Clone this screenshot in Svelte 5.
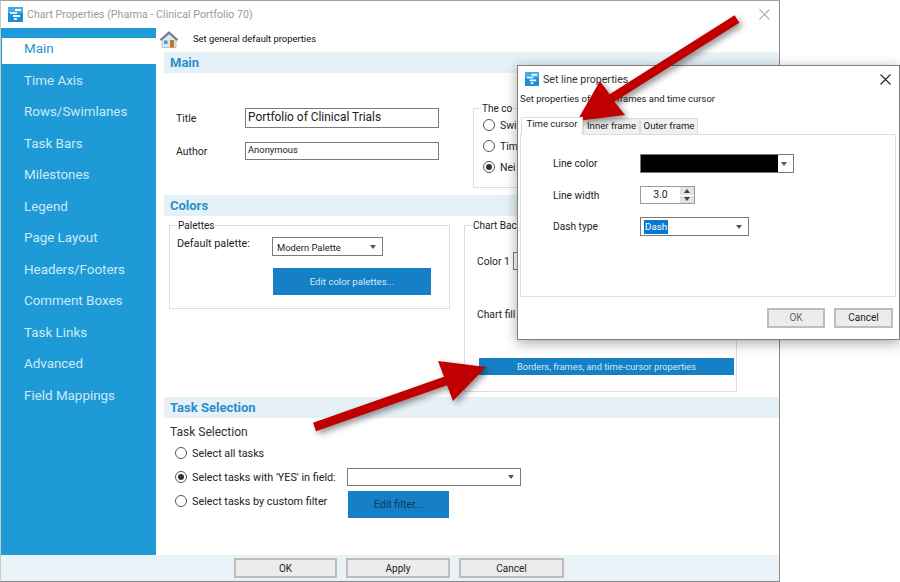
<script>
  const navItems = ['Main', 'Time Axis', 'Rows/Swimlanes', 'Task Bars', 'Milestones', 'Legend', 'Page Layout', 'Headers/Footers', 'Comment Boxes', 'Task Links', 'Advanced', 'Field Mappings'];
  const tabs = ['Time cursor', 'Inner frame', 'Outer frame'];
</script>

{#snippet appIcon()}
  <svg class="app-icon" viewBox="0 0 15 15" aria-hidden="true">
    <rect width="15" height="15" fill="#1b8fd2" />
    <rect width="15" height="6" fill="#3fb0e6" />
    <rect x="7" y="2" width="6" height="2" fill="#fff" />
    <rect x="2" y="5" width="7" height="2" fill="#d8effa" />
    <rect x="5" y="8" width="7" height="2" fill="#fff" />
    <rect x="6" y="11" width="3" height="2" fill="#d8effa" />
  </svg>
{/snippet}

{#snippet caret()}
  <span class="caret"></span>
{/snippet}

<div class="desktop">
  <div class="window">
    <div class="titlebar">
      {@render appIcon()}
      <span class="title-text">Chart Properties (Pharma - Clinical Portfolio 70)</span>
      <svg class="close-x" viewBox="0 0 11 11" aria-hidden="true"><path d="M.5.5l10 10M10.5.5l-10 10" stroke="#aeaeae" stroke-width="1.1" fill="none" /></svg>
    </div>

    <div class="body">
      <nav class="sidebar">
        {#each navItems as item, i}
          <div class="nav-item" class:active={i === 0}>{item}</div>
        {/each}
      </nav>

      <main class="content">
        <div class="page-head">
          <svg class="home" viewBox="0 0 20 18" aria-hidden="true">
            <path d="M3 9v8.500h14V9L10 3z" fill="#dfe9ef" stroke="#8fa2ad" stroke-width=".6" />
            <path d="M1 9.500L10 1.500l9 8-1.200 1L10 3.800 2.200 10.500z" fill="#6f7f88" stroke="#56646c" stroke-width=".5" />
            <rect x="11" y="10" width="4" height="7.500" fill="#c9761f" />
            <rect x="5" y="10.500" width="3.500" height="3.500" fill="#3e9ad0" />
          </svg>
          <span>Set general default properties</span>
        </div>

        <h2 class="section">Main</h2>
        <div class="main-body">
          <div class="fields">
            <div class="field title-field">
              <span>Title</span>
              <div class="input big">Portfolio of Clinical Trials</div>
            </div>
            <div class="field">
              <span>Author</span>
              <div class="input small">Anonymous</div>
            </div>
          </div>
          <div class="group combine">
            <span class="legend">The co</span>
            <div class="radio-line"><span class="radio"></span>Swi</div>
            <div class="radio-line"><span class="radio"></span>Tim</div>
            <div class="radio-line"><span class="radio on"></span>Nei</div>
          </div>
        </div>

        <h2 class="section">Colors</h2>
        <div class="colors-body">
          <div class="group palettes">
            <span class="legend">Palettes</span>
            <div class="palette-row">
              <span class="palette-label">Default palette:</span>
              <div class="select palette-select"><span class="palette-value">Modern Palette</span>{@render caret()}</div>
            </div>
            <button class="action edit-palettes">Edit color palettes...</button>
          </div>
          <div class="group background">
            <span class="legend">Chart Back</span>
            <div class="color-row">
              <span class="color-label">Color 1</span>
              <div class="color-box"></div>
            </div>
            <div class="fill-row">Chart fill</div>
            <button class="action borders">Borders, frames, and time-cursor properties</button>
          </div>
        </div>

        <h2 class="section">Task Selection</h2>
        <div class="task-body">
          <div class="task-title">Task Selection</div>
          <div class="task-row"><div class="radio-line task-radio"><span class="radio"></span>Select all tasks</div></div>
          <div class="task-row">
            <div class="radio-line task-radio"><span class="radio on"></span>Select tasks with 'YES' in field:</div>
            <div class="select field-select">{@render caret()}</div>
          </div>
          <div class="task-row last">
            <div class="radio-line task-radio"><span class="radio"></span>Select tasks by custom filter</div>
            <button class="action edit-filter">Edit filter...</button>
          </div>
        </div>
      </main>
    </div>

    <footer class="footer">
      <button class="plain ok">OK</button>
      <button class="plain apply">Apply</button>
      <button class="plain cancel">Cancel</button>
    </footer>
  </div>

  <div class="dialog">
    <div class="dialog-title">
      {@render appIcon()}
      <span>Set line properties</span>
      <svg class="dialog-close" viewBox="0 0 11 11" aria-hidden="true"><path d="M.5.5l10 10M10.5.5l-10 10" stroke="#222" stroke-width="1.1" fill="none" /></svg>
    </div>
    <div class="dialog-sub">Set properties of lines, frames and time cursor</div>
    <div class="tabs">
      {#each tabs as tab, i}
        <div class="tab" class:current={i === 0}>{tab}</div>
      {/each}
    </div>
    <div class="pane">
      <div class="pane-row">
        <span>Line color</span>
        <div class="select color-select"><div class="swatch"></div>{@render caret()}</div>
      </div>
      <div class="pane-row">
        <span>Line width</span>
        <div class="spinner">
          <span class="spin-value">3.0</span>
          <div class="spin-buttons">
            <span class="spin up"></span>
            <span class="spin down"></span>
          </div>
        </div>
      </div>
      <div class="pane-row">
        <span>Dash type</span>
        <div class="select dash-select"><span class="picked">Dash</span>{@render caret()}</div>
      </div>
    </div>
    <div class="dialog-actions">
      <button class="plain dialog-ok">OK</button>
      <button class="plain dialog-cancel">Cancel</button>
    </div>
  </div>

  <svg class="arrows" viewBox="0 0 900 582" aria-hidden="true">
    <polygon points="734.600,15.200 739.400,22.800 614.400,101.800 625,115 577,121 600,81 609.600,94.200" fill="#c00000" />
    <polygon points="313,422.800 316,431.200 447,385.200 453,401 486,367 438,361 444,376.800" fill="#c00000" />
  </svg>
</div>

<style>
  :global(body) {
    margin: 0;
    background: #fff;
  }

  .desktop {
    position: relative;
    width: 900px;
    height: 582px;
    overflow: hidden;
    font-family: Roboto, "Noto Sans", sans-serif;
    font-size: 10px;
    color: #222;
  }

  .window {
    width: 780px;
    height: 582px;
    box-sizing: border-box;
    display: flex;
    flex-direction: column;
    background: #fff;
    border: 1px solid #8a8a8a;
    border-left-color: #c8c8c8;
    border-top-color: #a0a0a0;
  }

  .titlebar {
    height: 27px;
    flex: none;
    display: flex;
    align-items: center;
    padding-left: 7px;
    padding-right: 9px;
  }

  .app-icon {
    width: 15px;
    height: 15px;
    flex: none;
  }

  .title-text {
    margin-left: 4px;
    font-size: 10.650px;
    color: #9a9a9a;
  }

  .close-x {
    width: 11px;
    height: 11px;
    margin-left: auto;
    margin-top: -1px;
  }

  .body {
    flex: 1;
    display: flex;
    min-height: 0;
  }

  .sidebar {
    width: 155px;
    flex: none;
    background: #1e9ad6;
    padding-top: 10px;
    box-sizing: border-box;
    display: flex;
    flex-direction: column;
    gap: 6px;
  }

  .nav-item {
    height: 25.500px;
    line-height: 21.500px;
    padding-left: 23px;
    font-size: 13.400px;
    color: #cdeaf8;
  }

  .nav-item.active {
    margin-left: 1px;
    padding-left: 22px;
    background: #fff;
    color: #1e94d4;
  }

  .content {
    flex: 1;
    min-width: 0;
    padding-left: 8px;
    display: flex;
    flex-direction: column;
  }

  .page-head {
    height: 24px;
    flex: none;
    display: flex;
    align-items: center;
    margin-left: -5px;
    font-size: 9.400px;
    color: #111;
  }

  .home {
    width: 20px;
    height: 18px;
    margin-right: 14px;
    margin-top: -3px;
  }

  .page-head span {
    margin-top: -3px;
  }

  .section {
    margin: 0;
    height: 21px;
    flex: none;
    background: #e6f1f7;
    padding-left: 6px;
    line-height: 21px;
    font-size: 13px;
    font-weight: 700;
    color: #2a8fca;
  }

  .main-body {
    height: 122px;
    flex: none;
    box-sizing: border-box;
    padding-top: 35px;
    display: flex;
  }

  .fields {
    margin-left: 12px;
    width: 263px;
    display: flex;
    flex-direction: column;
    gap: 14px;
  }

  .field {
    display: flex;
    align-items: center;
    font-size: 10.500px;
  }

  .field span {
    width: 69px;
    flex: none;
    margin-top: 1px;
  }

  .input {
    width: 194px;
    box-sizing: border-box;
    border: 1px solid #7a7a7a;
    padding-left: 2px;
    background: #fff;
    white-space: nowrap;
  }

  .input.big {
    height: 20px;
    line-height: 16px;
    font-size: 11.900px;
  }

  .input.small {
    height: 18px;
    line-height: 13px;
    font-size: 9.400px;
  }

  .group {
    position: relative;
    box-sizing: border-box;
    border: 1px solid #ddd;
  }

  .legend {
    position: absolute;
    top: -7px;
    left: 7px;
    background: #fff;
    padding: 0 1px;
    font-size: 10px;
    line-height: 14px;
    white-space: nowrap;
  }

  .combine {
    margin-left: 34px;
    width: 260px;
    height: 80px;
    padding: 10px 0 0 9px;
    display: flex;
    flex-direction: column;
    gap: 9px;
    font-size: 10.500px;
  }

  .radio-line {
    display: flex;
    align-items: center;
    height: 12px;
    white-space: nowrap;
  }

  .radio {
    width: 12px;
    height: 12px;
    box-sizing: border-box;
    flex: none;
    border: 1px solid #555;
    border-radius: 50%;
    margin-right: 5px;
    background: #fff;
    display: flex;
    align-items: center;
    justify-content: center;
  }

  .radio.on::after {
    content: "";
    width: 6px;
    height: 6px;
    border-radius: 50%;
    background: #333;
  }

  .colors-body {
    height: 181px;
    flex: none;
    box-sizing: border-box;
    padding: 9px 0 0 5px;
    display: flex;
    align-items: flex-start;
    gap: 14px;
  }

  .palettes {
    width: 281px;
    height: 84px;
    padding: 11px 0 0 7px;
    font-size: 10.800px;
  }

  .palette-row {
    display: flex;
    align-items: flex-start;
  }

  .palette-label {
    width: 95px;
    flex: none;
    line-height: 14px;
  }

  .select {
    position: relative;
    box-sizing: border-box;
    height: 19px;
    border: 1px solid #7a7a7a;
    background: #fff;
    display: flex;
    align-items: center;
    padding-left: 4px;
    font-size: 9.800px;
  }

  .palette-value {
    font-size: 9.400px;
    margin-top: 2px;
  }

  .caret {
    position: absolute;
    right: 6px;
    top: 50%;
    margin-top: -2px;
    border-left: 3.500px solid transparent;
    border-right: 3.500px solid transparent;
    border-top: 4px solid #555;
  }

  .palette-select {
    width: 111px;
  }

  .action {
    display: block;
    border: none;
    padding: 0;
    background: #1580c6;
    color: #d3e8f6;
    font-family: inherit;
    font-size: 9.600px;
  }

  .edit-palettes {
    margin: 12px 0 0 96px;
    width: 158px;
    height: 27px;
  }

  .background {
    width: 273px;
    height: 167px;
    padding: 26px 0 0 12px;
    font-size: 10.300px;
  }

  .color-row {
    display: flex;
    align-items: center;
    height: 18px;
  }

  .color-label {
    width: 36px;
    flex: none;
  }

  .color-box {
    width: 100px;
    height: 18px;
    box-sizing: border-box;
    border: 1px solid #7a7a7a;
  }

  .fill-row {
    margin-top: 38px;
    line-height: 14px;
  }

  .borders {
    margin: 36px 0 0 2px;
    width: 255px;
    height: 17px;
    font-size: 9.300px;
  }

  .task-body {
    flex: 1;
    padding: 7px 0 0 6px;
    font-size: 10.800px;
  }

  .task-title {
    height: 16px;
    line-height: 14px;
    font-size: 12px;
    color: #333;
  }

  .task-row {
    display: flex;
    align-items: center;
    height: 24px;
  }

  .task-row.last {
    align-items: flex-start;
  }

  .task-row.last .task-radio {
    margin-top: 6px;
  }

  .task-radio {
    margin-left: 5px;
    width: 172px;
    flex: none;
  }

  .field-select {
    width: 174px;
    height: 18px;
  }

  .edit-filter {
    width: 101px;
    height: 27px;
    margin: 2px 0 0 1px;
    font-size: 10.600px;
    color: #0d3a5c;
  }

  .footer {
    height: 26px;
    flex: none;
    background: #e9f2f7;
    display: flex;
    padding: 3px 0 0 233px;
    box-sizing: border-box;
    gap: 9px;
  }

  .plain {
    height: 20px;
    box-sizing: border-box;
    padding: 0;
    border: 2px solid #bdbdbd;
    background: #ececec;
    font-family: inherit;
    font-size: 10px;
    color: #222;
  }

  .ok { width: 103px; }
  .apply { width: 104px; }
  .cancel { width: 105px; }

  .dialog {
    position: absolute;
    left: 517px;
    top: 65px;
    width: 383px;
    height: 275px;
    box-sizing: border-box;
    background: #fff;
    border: 1px solid #808080;
    box-shadow: 0 3px 12px rgba(0, 0, 0, 0.35);
    font-size: 10px;
  }

  .dialog-title {
    height: 26px;
    display: flex;
    align-items: center;
    padding: 0 8px 0 7px;
    font-size: 10.600px;
    color: #333;
  }

  .dialog-title .app-icon {
    width: 14px;
    height: 14px;
    margin-right: 4px;
  }

  .dialog-close {
    width: 11px;
    height: 11px;
    margin-left: auto;
  }

  .dialog-sub {
    height: 14px;
    line-height: 14px;
    padding-left: 2px;
    font-size: 9.500px;
    color: #222;
  }

  .tabs {
    margin: 11px 0 0 3px;
    height: 17px;
    display: flex;
    align-items: flex-end;
  }

  .tab {
    box-sizing: border-box;
    height: 16px;
    line-height: 14px;
    text-align: center;
    background: #f0f0f0;
    border: 1px solid #ddd;
    border-bottom: none;
    font-size: 9.600px;
  }

  .tab:nth-child(1) { width: 62px; }
  .tab:nth-child(2) { width: 57px; }
  .tab:nth-child(3) { width: 58px; }

  .tab.current {
    height: 18px;
    line-height: 12px;
    background: #fff;
    position: relative;
    z-index: 1;
    margin-bottom: -1px;
  }

  .pane {
    margin: 0 0 0 2px;
    width: 376px;
    height: 163px;
    box-sizing: border-box;
    border: 1px solid #ddd;
    padding: 19px 0 0 32px;
    display: flex;
    flex-direction: column;
    gap: 13px;
  }

  .pane-row {
    display: flex;
    align-items: center;
  }

  .pane-row > span {
    width: 87px;
    flex: none;
    font-size: 10.200px;
  }

  .color-select {
    width: 154px;
    padding: 0;
    background: #fff;
  }

  .swatch {
    width: 137px;
    height: 100%;
    background: #000;
  }

  .spinner {
    width: 55px;
    height: 18px;
    box-sizing: border-box;
    border: 1px solid #9a9a9a;
    display: flex;
    font-size: 10.500px;
  }

  .spin-value {
    flex: 1;
    text-align: center;
    line-height: 15px;
  }

  .spin-buttons {
    width: 14px;
    display: flex;
    flex-direction: column;
    gap: 1px;
  }

  .spin {
    flex: 1;
    background: #e1e1e1;
    display: flex;
    align-items: center;
    justify-content: center;
  }

  .spin::after {
    content: "";
    border-left: 3px solid transparent;
    border-right: 3px solid transparent;
  }

  .spin.up::after { border-bottom: 4px solid #444; }
  .spin.down::after { border-top: 4px solid #444; }

  .dash-select {
    width: 109px;
    height: 19px;
    padding-left: 3px;
  }

  .picked {
    background: #0a78d0;
    color: #fff;
    padding: 0 1px;
    line-height: 14px;
  }

  .dialog-actions {
    margin-top: 11px;
    padding-right: 6px;
    display: flex;
    justify-content: flex-end;
    gap: 9px;
  }

  .dialog-actions .plain {
    padding-bottom: 2px;
  }

  .dialog-ok {
    width: 58px;
    color: #666;
  }

  .dialog-cancel {
    width: 59px;
  }

  .arrows {
    position: absolute;
    inset: 0;
    width: 900px;
    height: 582px;
    pointer-events: none;
    filter: drop-shadow(3px 3px 3px rgba(0, 0, 0, 0.42));
  }
</style>
